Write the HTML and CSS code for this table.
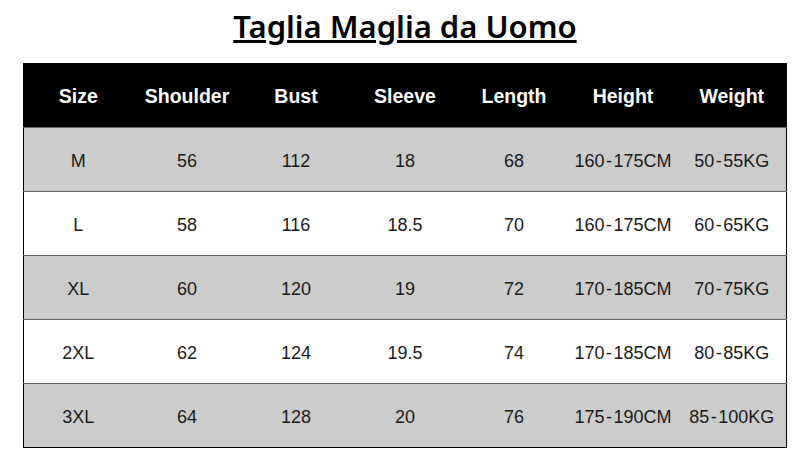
FILE: index.html
```html
<!DOCTYPE html>
<html>
<head>
<meta charset="utf-8">
<link rel="stylesheet" href="styles.css">
</head>
<body>
<h1 class="title">Taglia Maglia da Uomo</h1>
<table class="sizes">
<thead>
<tr><th>Size</th><th>Shoulder</th><th>Bust</th><th>Sleeve</th><th>Length</th><th>Height</th><th>Weight</th></tr>
</thead>
<tbody>
<tr class="gray"><td>M</td><td>56</td><td>112</td><td>18</td><td>68</td><td>160<span class="dash">-</span>175CM</td><td>50<span class="dash">-</span>55KG</td></tr>
<tr><td>L</td><td>58</td><td>116</td><td>18.5</td><td>70</td><td>160<span class="dash">-</span>175CM</td><td>60<span class="dash">-</span>65KG</td></tr>
<tr class="gray"><td>XL</td><td>60</td><td>120</td><td>19</td><td>72</td><td>170<span class="dash">-</span>185CM</td><td>70<span class="dash">-</span>75KG</td></tr>
<tr><td>2XL</td><td>62</td><td>124</td><td>19.5</td><td>74</td><td>170<span class="dash">-</span>185CM</td><td>80<span class="dash">-</span>85KG</td></tr>
<tr class="gray"><td>3XL</td><td>64</td><td>128</td><td>20</td><td>76</td><td>175<span class="dash">-</span>190CM</td><td>85<span class="dash">-</span>100KG</td></tr>
</tbody>
</table>
</body>
</html>
```
FILE: styles.css
```css
html, body {
  margin: 0;
  padding: 0;
  background: #fff;
}
body {
  width: 810px;
  height: 473px;
  overflow: hidden;
  font-family: "Liberation Sans", Arial, sans-serif;
}
.title {
  margin: 0;
  height: 63px;
  box-sizing: border-box;
  padding-top: 8px;
  text-align: center;
  font-family: "Noto Sans", "Open Sans", sans-serif;
  font-weight: 600;
  font-size: 31px;
  line-height: 36px;
  color: #000;
  text-decoration: underline;
  text-decoration-thickness: 3px;
  text-underline-offset: 2px;
}
.sizes {
  margin-left: 23px;
  width: 764px;
  border-collapse: collapse;
  table-layout: fixed;
  border-left: 1px solid #000;
  border-right: 1px solid #000;
  border-bottom: 1px solid #000;
}
.sizes th, .sizes td {
  padding: 0;
  text-align: center;
  white-space: nowrap;
}
.sizes th {
  height: 62px;
  padding-top: 2px;
  background: #000;
  color: #fff;
  font-size: 19.5px;
  font-weight: bold;
  border-bottom: 1px solid #666;
}
.sizes td {
  height: 60px;
  padding-top: 3px;
  font-size: 18px;
  color: #1a1a1a;
  border-bottom: 1px solid #666;
}
.dash {
  margin: 0 1.5px;
}
.sizes tr:last-child td {
  border-bottom: 1px solid #000;
}
.sizes tr.gray td {
  background: #ccc;
}
```
